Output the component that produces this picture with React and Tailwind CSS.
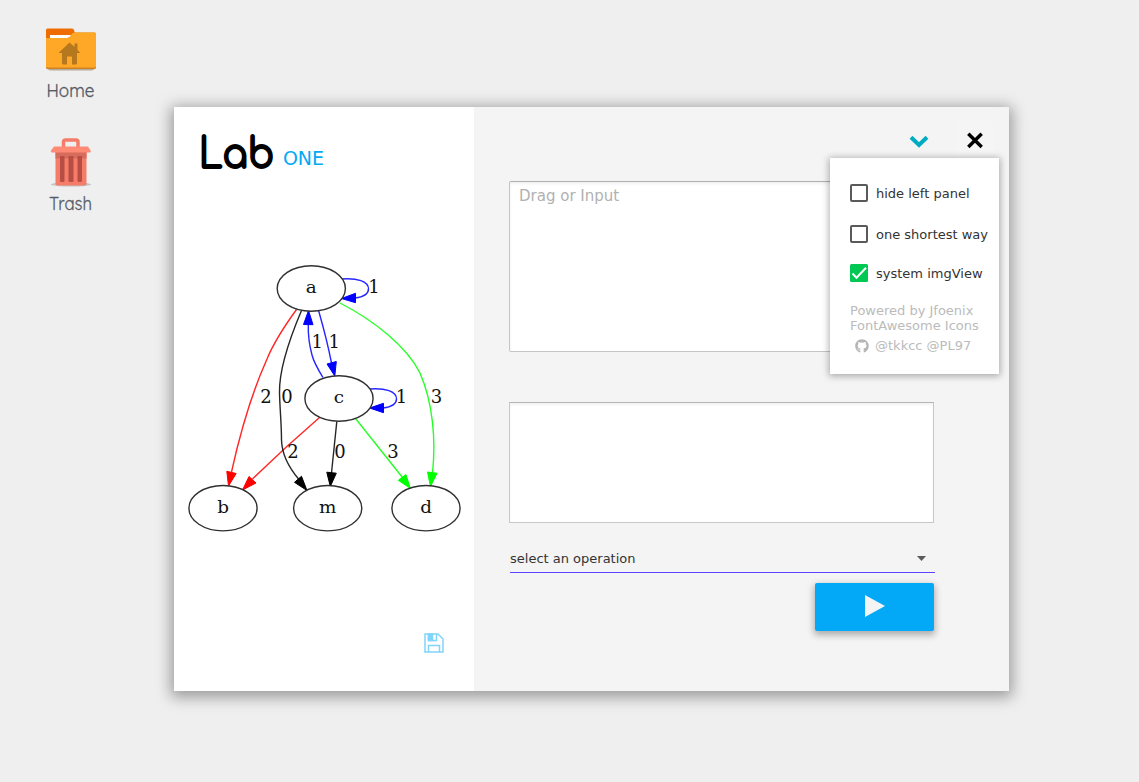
import React from "react";
import { FaGithub } from "react-icons/fa";

const nodes = [
  { id: "a", x: 311.3, y: 288.5 },
  { id: "c", x: 339, y: 398.5 },
  { id: "b", x: 223, y: 508.2 },
  { id: "m", x: 327.7, y: 508.2 },
  { id: "d", x: 426, y: 508.2 },
];

const edges = [
  { color: "#0000ff", d: "M342 279 C357 278 368.500 281 368.500 289 C368.500 294 363 297 355 298", tip: "341.5,298.5 355.500,293.3 355.500,302.7" },
  { color: "#0000ff", d: "M370 389 C385 388 396.500 391 396.500 399 C396.500 404 391 407 383 408", tip: "369.500,408 383.500,403.3 383.500,412.7" },
  { color: "#0000ff", d: "M323 377.500 C319 371 314 363 312 355 C309 344 308 334 308.3 324", tip: "308.500,310.500 303.500,324.500 313,324.700" },
  { color: "#0000ff", d: "M318.700 311 C323 326 328 345 331.500 363", tip: "334.800,376 327,364 336.300,361.500" },
  { color: "#ff0000", d: "M296.500 309.500 C286 324 274 342 267 359 C250 397 239 438 231.500 472", tip: "228.500,486 226.800,471.3 236.200,473.5" },
  { color: "#ff0000", d: "M319.500 417.500 C298 436 273 459 252.500 479", tip: "242.500,490 249,476.500 256,483" },
  { color: "#000000", d: "M301.500 310.500 C289 340 279 372 279.500 393 C280 411 281.500 424 281.500 440 C282 456 290 469 299 479.500", tip: "307,490.5 294.500,482.300 301.500,476.300" },
  { color: "#000000", d: "M336.800 421.500 L331.500 473", tip: "330.300,486.500 326.800,472.200 336.300,473.200" },
  { color: "#00ff00", d: "M340 303 C375 321 407 347 420 373 C433 403 436 440 432.500 473", tip: "430.500,486.500 427.500,472 437,473.2" },
  { color: "#00ff00", d: "M355.500 418.500 L402.500 477.500", tip: "410.500,488.500 398.300,480.300 405.900,474.600" },
];

const labels = [
  ["1", 374, 293], ["1", 317.3, 348], ["1", 334.3, 348], ["1", 401.500, 403],
  ["2", 266, 403], ["0", 287, 403], ["3", 436.500, 403],
  ["2", 293, 458], ["0", 340, 458], ["3", 393, 458],
];

function Graph() {
  return (
    <svg className="block h-[284px] w-[300px]" viewBox="174 257 300 284" fill="none">
      {edges.map((e, i) => (
        <g key={i} stroke={e.color} strokeWidth="1.4">
          <path d={e.d} opacity="0.85" />
          <polygon points={e.tip} fill={e.color} strokeWidth="1" />
        </g>
      ))}
      <g className="font-['DejaVu_Serif',serif]" fontSize="17" textAnchor="middle">
        {nodes.map((n) => (
          <g key={n.id}>
            <ellipse cx={n.x} cy={n.y} rx="34.1" ry="22.700" fill="#fff" stroke="#303030" strokeWidth="1.4" />
            <text transform={`translate(${n.x} ${n.y + 4.5}) scale(1.08 1)`} fill="#111">{n.id}</text>
          </g>
        ))}
      </g>
      <g className="font-['DejaVu_Serif',serif]" fill="#111" fontSize="18" textAnchor="middle">
        {labels.map(([t, x, y], i) => (
          <text key={i} x={x} y={y}>{t}</text>
        ))}
      </g>
    </svg>
  );
}

function HomeFolder() {
  return (
    <svg className="h-[44px] w-[50px]" viewBox="0 0 50 44">
      <path d="M0 14V2Q0 .5 1.500 .5H26Q27.500 .5 28 2L30 9V14Z" fill="#ef6c00" />
      <path d="M4 7H26L23 12H4Z" fill="#fff" />
      <path d="M1 41H49L46 42.500H4Z" fill="#b5aa9b" />
      <path d="M0 10H21Q24 10 25 7Q26 4.500 29 4.500H48.500Q50 4.500 50 6.500V39.500Q50 41 48.500 41H1.500Q0 41 0 39.500Z" fill="#d08420" />
      <path d="M0 10H21Q24 10 25 7Q26 4.500 29 4.500H48.500Q50 4.500 50 6.500V38.500Q50 39.500 48.500 39.500H1.500Q0 39.500 0 38.500Z" fill="#ffa726" />
      <path d="M23.500 14.500L28.500 19V15.500H31.500V22L34.500 25H31V35Q31 36.500 29.500 36.500H26V28.500H21V36.500H17.500Q16 36.500 16 35V25H12.500Z" fill="#b5781f" />
    </svg>
  );
}

function TrashCan() {
  return (
    <svg className="h-[50px] w-[42px]" viewBox="0 0 42 50">
      <ellipse cx="21" cy="46.500" rx="20" ry="2" fill="#c4c2c2" />
      <path d="M13.500 10V4Q13.500 2 15.500 2H26Q28 2 28 4V10" fill="none" stroke="#f47c68" strokeWidth="3.500" />
      <path d="M5.500 12H36.500V45.500Q36.500 47.500 34.500 47.500H7.500Q5.500 47.500 5.500 45.500Z" fill="#f47c68" />
      <path d="M5.500 14H36.500V20.500H5.500Z" fill="#d76c5c" />
      <path d="M4 8.500H38L40.500 12.500Q41.500 14.500 39 14.500H2Q.2 14.500 1 12.500Z" fill="#ff8a75" />
      <path d="M10 18H14.500V43Q14.500 44 13 44H11.500Q10 44 10 43ZM18.500 18H23.500V43Q23.500 44 22 44H20Q18.500 44 18.500 43ZM27.500 18H32V43Q32 44 30.500 44H29Q27.500 44 27.500 43Z" fill="#b84e43" />
    </svg>
  );
}

function DesktopLabel({ text, width }) {
  return (
    <svg className="block h-[24px] w-[60px] font-[Quicksand,Comfortaa,Lato,sans-serif]" viewBox="0 0 60 24">
      <text x="29.500" y="17" fontSize="18" fill="#555b67" stroke="#555b67" strokeWidth="0.3" textAnchor="middle" textLength={width} lengthAdjust="spacingAndGlyphs">{text}</text>
    </svg>
  );
}

function Option({ label, checked, className = "" }) {
  return (
    <label className={`flex h-[18px] items-center gap-2 whitespace-nowrap ${className}`}>
      {checked ? (
        <svg className="size-[18px] shrink-0" viewBox="0 0 18 18">
          <rect width="18" height="18" rx="1.500" fill="#00c853" />
          <path d="M2.500 9.500L6.500 13.700L16 3.700" fill="none" stroke="#fff" strokeWidth="2" />
        </svg>
      ) : (
        <span className="size-[18px] shrink-0 rounded-[2px] border-2 border-[#5a5a5a] bg-white" />
      )}
      <span className="pt-[2px]">{label}</span>
    </label>
  );
}

export default function App() {
  return (
    <div className="relative h-[782px] w-[1139px] overflow-hidden bg-[#efefef] font-['DejaVu_Sans',sans-serif]">
      <div className="flex w-[141px] flex-col items-center pt-[28px]">
        <HomeFolder />
        <div className="mt-[8px]"><DesktopLabel text="Home" width={48} /></div>
        <div className="mt-[34px]"><TrashCan /></div>
        <div className="mt-[5px]"><DesktopLabel text="Trash" width={43} /></div>
      </div>

      <main className="absolute left-[174px] top-[107px] flex h-[584px] w-[835px] bg-[#f4f4f4] shadow-[0_3px_14px_3px_rgba(0,0,0,0.36)]">
        <section className="flex w-[300px] flex-col bg-white">
          <header className="flex h-[150px] items-start pl-[24px] pt-[17px]">
            <svg className="h-[52px] w-[82px] font-[Comfortaa,Quicksand,Lato,sans-serif]" viewBox="0 0 82 52">
              <text transform="translate(0.8 43.600) scale(0.87 0.98)" fontSize="43" fill="#000" stroke="#000" strokeWidth="2">Lab</text>
            </svg>
            <span className="ml-[3px] mt-[20px] text-[19px] leading-7 tracking-[-0.1px] text-[#03a9f4]">ONE</span>
          </header>
          <Graph />
          <div className="mt-[92px] flex justify-end pr-[30.500px]">
            <svg className="size-[20px]" viewBox="0 0 20 20" fill="none" stroke="#81d4fa" strokeWidth="1.500">
              <path d="M1 1H14L19 6V19H1Z" />
              <path d="M4.500 1V7.500H12.500V1M4.500 19V12.500H15.500V19" />
              <path d="M4.500 1H8.500V7.500H4.500Z" fill="#81d4fa" />
            </svg>
          </div>
        </section>

        <section className="flex w-[535px] flex-col pl-[35px]">
          <div className="flex h-[74px] items-start justify-end gap-[18px] pr-[15px] pt-[14px]">
            <button className="flex h-[39px] w-[38px] items-center justify-center">
              <svg className="h-[14px] w-[20px]" viewBox="0 0 20 14" fill="none" stroke="#00acc1" strokeWidth="4">
                <path d="M2 3.200L10 11L18 3.200" />
              </svg>
            </button>
            <button className="flex h-[37px] w-[38px] items-center justify-center rounded-[3px] bg-[#f5f5f5]">
              <svg className="size-[18px]" viewBox="0 0 18 18" fill="none" stroke="#000" strokeWidth="3.400">
                <path d="M2.300 2.700L15.700 16M15.700 2.700L2.300 16" />
              </svg>
            </button>
          </div>
          <div className="h-[171px] w-[425px] rounded-[2px] border border-[#c5c5c5] border-t-[#afafaf] bg-white px-[9px] pt-[4px] text-[15px] leading-5 text-[#b1b1b1] shadow-[inset_0_2px_3px_rgba(0,0,0,0.06)]">Drag or Input</div>
          <div className="mt-[50px] h-[121px] w-[425px] border border-[#c8c8c8] border-t-[#b5b5b5] bg-white shadow-[inset_0_2px_3px_rgba(0,0,0,0.05)]" />
          <div className="ml-px mt-[22px] flex h-[28px] w-[425px] items-center justify-between border-b border-[#5b43ff] pr-[9px] text-[13px] text-[#333]">
            <span>select an operation</span>
            <svg className="h-[5px] w-[9px]" viewBox="0 0 9 5"><path d="M0 0H9L4.500 5Z" fill="#5a5a5a" /></svg>
          </div>
          <button className="ml-[306px] mt-[10px] flex h-[48px] w-[119px] items-center justify-center rounded-[2px] bg-[#03a9f7] shadow-[0_3px_7px_1px_rgba(0,0,0,0.3)]">
            <svg className="h-[22px] w-[20px] -translate-y-px" viewBox="0 0 20 22"><path d="M0 0L20 11L0 22Z" fill="#f4f4f4" /></svg>
          </button>
        </section>
      </main>

      <aside className="absolute left-[830px] top-[158px] flex h-[216px] w-[169px] flex-col bg-white pl-[20px] pt-[26px] text-[13px] text-[#333] shadow-[0_1px_7px_1px_rgba(0,0,0,0.32)]">
        <Option label="hide left panel" />
        <Option label="one shortest way" className="mt-[23px]" />
        <Option label="system imgView" checked className="mt-[21px]" />
        <div className="mt-[21px] whitespace-nowrap leading-[15px] text-[#bbb]">
          <p>Powered by Jfoenix</p>
          <p>FontAwesome Icons</p>
          <p className="mt-[5px] flex items-center gap-[6px] pl-[5px]">
            <FaGithub className="size-[14px] text-[#b5b5b5]" />
            <span>@tkkcc @PL97</span>
          </p>
        </div>
      </aside>
    </div>
  );
}
